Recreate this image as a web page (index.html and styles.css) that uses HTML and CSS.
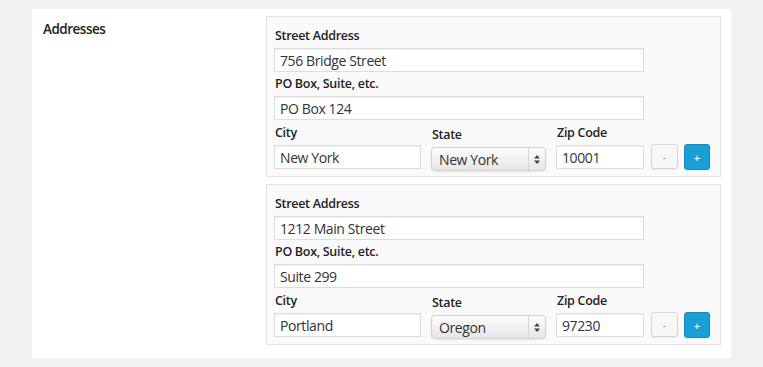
FILE: index.html
```html
<!DOCTYPE html>
<html>
  <head>
    <meta name="viewport" content="width=device-width, initial-scale=1">
    <link rel="stylesheet" href="styles.css">
  </head>

  <body>
    <div class="panel">
      <div class="panel-label">Addresses</div>

      <div class="address-list">
        <div class="address">
          <label class="field-label">Street Address</label>
          <input type="text" class="text-input wide" value="756 Bridge Street">
          <label class="field-label">PO Box, Suite, etc.</label>
          <input type="text" class="text-input wide" value="PO Box 124">

          <div class="row">
            <div class="col col-city">
              <label class="field-label">City</label>
              <input type="text" class="text-input" value="New York">
            </div>
            <div class="col col-state">
              <label class="field-label">State</label>
              <div class="select-box">
                <select class="select">
                  <option>New York</option>
                  <option>Oregon</option>
                </select>
                <span class="select-arrow">
                  <svg width="6" height="9" viewBox="0 0 6 9"><path d="M3 0L6 3.5H0Z M3 9L0 5.5H6Z" fill="#444"/></svg>
                </span>
              </div>
            </div>
            <div class="col col-zip">
              <label class="field-label">Zip Code</label>
              <input type="text" class="text-input" value="10001">
            </div>
            <button class="button button-minus">-</button>
            <button class="button button-plus">+</button>
          </div>
        </div>

        <div class="address">
          <label class="field-label">Street Address</label>
          <input type="text" class="text-input wide" value="1212 Main Street">
          <label class="field-label">PO Box, Suite, etc.</label>
          <input type="text" class="text-input wide" value="Suite 299">

          <div class="row">
            <div class="col col-city">
              <label class="field-label">City</label>
              <input type="text" class="text-input" value="Portland">
            </div>
            <div class="col col-state">
              <label class="field-label">State</label>
              <div class="select-box">
                <select class="select">
                  <option>Oregon</option>
                  <option>New York</option>
                </select>
                <span class="select-arrow">
                  <svg width="6" height="9" viewBox="0 0 6 9"><path d="M3 0L6 3.5H0Z M3 9L0 5.5H6Z" fill="#444"/></svg>
                </span>
              </div>
            </div>
            <div class="col col-zip">
              <label class="field-label">Zip Code</label>
              <input type="text" class="text-input" value="97230">
            </div>
            <button class="button button-minus">-</button>
            <button class="button button-plus">+</button>
          </div>
        </div>
      </div>
    </div>
  </body>
</html>
```

FILE: styles.css
```css
/* Page */
body {
margin: 0;
background: #f1f1f1;
font-family: "Open Sans", "Liberation Sans", sans-serif;
color: #333;
}

.panel {
display: flex;
width: 699px;
height: 349px;
box-sizing: border-box;
margin: 9px 0 0 32px;
padding: 7px 10px 0 11px;
background: #fff;
}

.panel-label {
width: 223px;
padding-top: 4px;
font-size: 13.5px;
font-weight: 600;
letter-spacing: -0.5px;
line-height: 18px;
color: #222;
}

/* Address boxes */
.address-list {
display: flex;
flex-direction: column;
gap: 7px;
}

.address {
width: 455px;
height: 161px;
box-sizing: border-box;
padding: 7px 7px 0 7px;
background: #fafafa;
border: 1px solid #e3e3e3;
}

.field-label {
display: block;
margin: 4px 0 5px 1px;
font-size: 12.5px;
font-weight: 600;
letter-spacing: -0.3px;
line-height: 15px;
color: #222;
}

.text-input {
display: block;
height: 24px;
box-sizing: border-box;
padding: 0 5px;
margin: 0;
border: 1px solid #ddd;
background: #fff;
box-shadow: inset 0 1px 2px rgba(0,0,0,.07);
font-family: "Open Sans", "Liberation Sans", sans-serif;
font-size: 14px;
letter-spacing: -0.4px;
color: #333;
outline: none;
}

.wide {
width: 370px;
}

.row {
display: flex;
align-items: flex-end;
margin-top: 1px;
}

.col-city .text-input {
width: 147px;
}

.col-state {
margin-left: 10px;
position: relative;
top: 2px;
}

.col-zip {
margin-left: 10px;
}

.col-zip .text-input {
width: 88px;
}

/* Fake select */
.select-box {
display: flex;
width: 115px;
height: 24px;
box-sizing: border-box;
border: 1px solid #d3d3d3;
border-radius: 4px;
background: linear-gradient(#fdfdfd, #e6e6e6);
box-shadow: 0 1px 2px rgba(0,0,0,.08);
}

.select {
-webkit-appearance: none;
appearance: none;
flex: 1;
min-width: 0;
border: none;
background: transparent;
padding: 0 0 0 7px;
font-family: "Open Sans", "Liberation Sans", sans-serif;
font-size: 14px;
letter-spacing: -0.4px;
color: #333;
outline: none;
}

.select-arrow {
display: flex;
align-items: center;
justify-content: center;
width: 16px;
border-left: 1px solid #d8d8d8;
}

/* Buttons */
.button {
height: 25px;
box-sizing: border-box;
border-radius: 3px;
padding: 0;
font-family: "Open Sans", "Liberation Sans", sans-serif;
font-size: 11px;
line-height: 1;
cursor: pointer;
}

.button-minus {
width: 27px;
margin-left: 7px;
border: 1px solid #d4d4d4;
background: #f7f7f7;
color: #999;
box-shadow: inset 0 1px 0 #fff, 0 1px 0 rgba(0,0,0,.06);
}

.button-plus {
width: 26px;
height: 26px;
margin-left: 6px;
margin-bottom: -1px;
border: 1px solid #0b8fc4;
background: #1a9fd6;
color: #fff;
font-weight: 600;
}
```
